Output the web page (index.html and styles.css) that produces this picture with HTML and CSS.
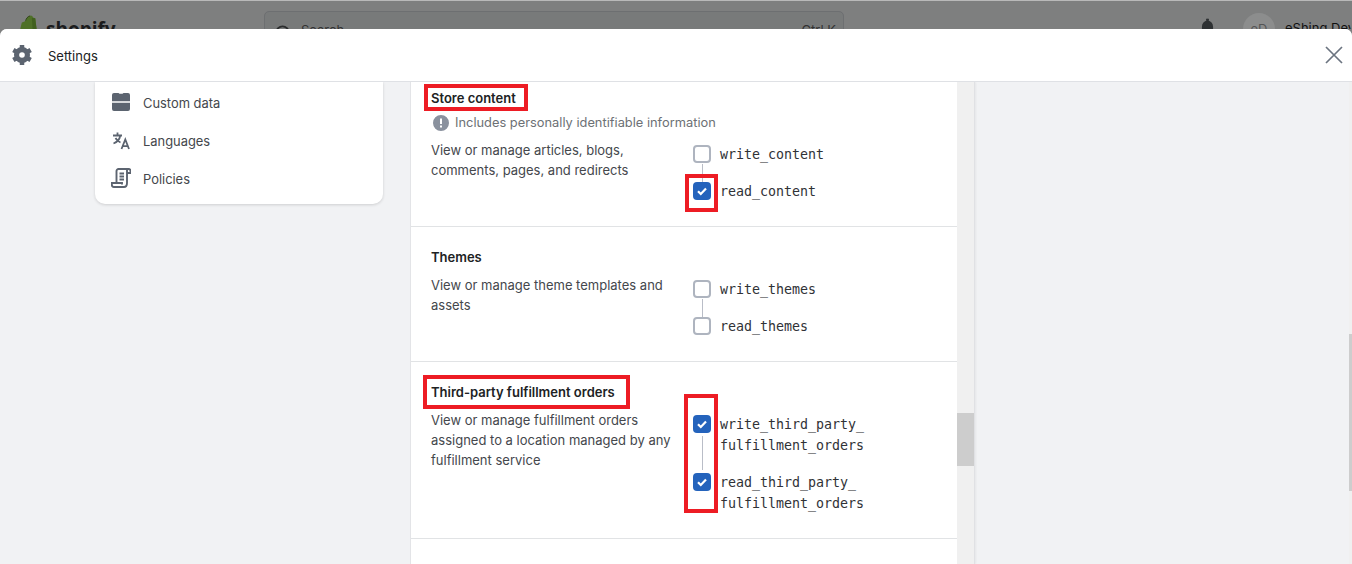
FILE: index.html
```html
<!DOCTYPE html>
<html lang="en">
<head>
<meta charset="utf-8">
<title>Settings</title>
<link rel="stylesheet" href="styles.css">
</head>
<body>
<div class="topbar">
  <div class="brand">
    <svg class="bag" viewBox="0 0 22 26"><path d="M1 23 4.500 8c2-1 3-1 4-2 1-3 3-5.500 5.500-5.500 1 0 2 1 2.200 2l2.300 1L21 23l-9 2.500z" fill="#4f7028"/><path d="M8.500 6c.5-2 2-4.500 4.500-5" fill="none" stroke="#2f4318" stroke-width="1"/><path d="M15 3l1.500 22 4.500-2-2.500-19.500z" fill="#41601f"/></svg>
    <span class="brand-name">shopify</span>
  </div>
  <div class="search">
    <svg class="search-icon" viewBox="0 0 20 20"><circle cx="9" cy="9" r="6.500" fill="none" stroke="#2b2d2e" stroke-width="2"/></svg>
    <span class="search-label">Search</span>
    <span class="search-key">Ctrl K</span>
  </div>
  <div class="account">
    <svg class="bell" viewBox="0 0 14 20"><path d="M7 0a1 1 0 0 1 1 2c3 1 5 3 5 7v7H1V9c0-4 2-6 5-7a1 1 0 0 1 1-2z" fill="#2e3133"/></svg>
    <span class="avatar">eD</span>
    <span class="account-name">eShing Dev</span>
  </div>
</div>

<div class="modal">
  <header class="modal-head">
    <svg class="gear" viewBox="0 0 20 20">
      <g class="gear-teeth"><path d="M10 0v20M1.340 5 18.660 15M18.660 5 1.340 15"/></g>
      <path fill-rule="evenodd" d="M10 2a8 8 0 1 1 0 16 8 8 0 0 1 0-16zM10 7.200a2.800 2.800 0 1 0 0 5.600 2.800 2.800 0 0 0 0-5.600z" fill="#5c6470"/>
      <circle cx="10" cy="10" r="2.800" fill="#fff"/>
    </svg>
    <span class="modal-title">Settings</span>
    <svg class="close" viewBox="0 0 18 18"><path d="M1 1l16 16M17 1 1 17" fill="none" stroke="#6b7480" stroke-width="1.700"/></svg>
  </header>
  <div class="modal-body">
    <nav class="side-card">
      <a class="side-item">
        <svg class="side-icon" viewBox="0 0 20 20"><path d="M3 1h4.500l1 .8h3l1-.8H17a2 2 0 0 1 2 2v6.300H1V3a2 2 0 0 1 2-2zM1 10.700h18V17a2 2 0 0 1-2 2H3a2 2 0 0 1-2-2z" fill="#5c6470"/></svg>
        <span>Custom data</span>
      </a>
      <a class="side-item">
        <svg class="side-icon" viewBox="0 0 20 20"><path d="M6.500 2.500v2.500M2 5.500h9M9.300 5.500C8.700 9 6.500 12 2.500 13.500M4.500 8c1 2 2.500 3.500 5 4.500M10.500 19l3.800-9.500L18 19M11.800 16.200h5" fill="none" stroke="#5c6470" stroke-width="1.800"/></svg>
        <span>Languages</span>
      </a>
      <a class="side-item">
        <svg class="side-icon" viewBox="0 0 20 20"><path d="M5.500 15V3a2 2 0 0 1 2-2h10a2 2 0 0 1 2 2v2H16M16 1.500V15c0 2.300-1 4-3 4H3c-1.500 0-2.200-1-2.200-2.500V15H11v1.500M8.500 5.500h4.500M8.500 8.500h4.500M8.500 11.500h4.500" fill="none" stroke="#5c6470" stroke-width="1.900"/></svg>
        <span>Policies</span>
      </a>
    </nav>

    <main class="scopes-panel">
      <section class="scope-section">
        <h3 class="scope-title">Store content</h3>
        <p class="pii">
          <svg class="pii-icon" viewBox="0 0 16 16"><path fill-rule="evenodd" d="M8 0a8 8 0 1 1 0 16A8 8 0 0 1 8 0zM7 3.500v5.500h2V3.500zM7 10.500v2h2v-2z" fill="#8a919e"/></svg>
          <span>Includes personally identifiable information</span>
        </p>
        <div class="scope-grid">
          <p class="scope-desc">View or manage articles, blogs, comments, pages, and redirects</p>
          <ul class="scope-list">
            <li class="scope-row"><span class="check"></span><code>write_content</code></li>
            <li class="scope-row"><span class="check on"><svg viewBox="0 0 18 18"><path d="M5 9.200l2.800 2.800L13 6.500"/></svg></span><code>read_content</code></li>
          </ul>
        </div>
        <i class="mark mark-title-store"></i>
        <i class="mark mark-check-store"></i>
      </section>

      <section class="scope-section">
        <h3 class="scope-title">Themes</h3>
        <div class="scope-grid">
          <p class="scope-desc">View or manage theme templates and assets</p>
          <ul class="scope-list">
            <li class="scope-row"><span class="check"></span><code>write_themes</code></li>
            <li class="scope-row"><span class="check"></span><code>read_themes</code></li>
          </ul>
        </div>
      </section>

      <section class="scope-section">
        <h3 class="scope-title">Third-party fulfillment orders</h3>
        <div class="scope-grid">
          <p class="scope-desc">View or manage fulfillment orders assigned to a location managed by any fulfillment service</p>
          <ul class="scope-list">
            <li class="scope-row"><span class="check on"><svg viewBox="0 0 18 18"><path d="M5 9.200l2.800 2.800L13 6.500"/></svg></span><code>write_third_party_<br>fulfillment_orders</code></li>
            <li class="scope-row"><span class="check on"><svg viewBox="0 0 18 18"><path d="M5 9.200l2.800 2.800L13 6.500"/></svg></span><code>read_third_party_<br>fulfillment_orders</code></li>
          </ul>
        </div>
        <i class="mark mark-title-third"></i>
        <i class="mark mark-check-third"></i>
      </section>
    </main>
    <div class="panel-scroll"><span class="panel-thumb"></span></div>
    <div class="modal-scroll"><span class="modal-thumb"></span></div>
  </div>
</div>
</body>
</html>
```
FILE: styles.css
```css
* { box-sizing: border-box; }
html, body { margin: 0; height: 100%; overflow: hidden; }
body {
  background: #7e7f7f;
  border-top: 1px solid #b9b9b9;
  font-family: Inter, "Noto Sans", sans-serif;
  font-size: 13px;
  line-height: 20px;
  color: #303236;
  position: relative;
}
.topbar {
  height: 28px;
  display: flex;
  align-items: flex-start;
  overflow: hidden;
}
.brand { flex: none; width: 264px; padding: 14px 0 0 17px; display: flex; gap: 7px; align-items: flex-start; }
.bag { width: 22px; height: 25px; }
.brand-name { font: 700 19px/28px "Open Sans", sans-serif; color: #1b1c1d; }
.search {
  flex: none;
  width: 580px;
  height: 40px;
  margin-top: 10px;
  border: 1px solid #6d6f71;
  border-radius: 5px;
  background: #787a7a;
  display: flex;
  align-items: flex-start;
  padding: 8px 7px 0 9px;
  gap: 8px;
  color: #333;
}
.search-icon { width: 19px; height: 19px; margin-top: 4px; }
.search-label { flex: 1; }
.account { flex: 1; min-width: 0; padding-left: 357px; display: flex; align-items: flex-start; }
.bell { flex: none; width: 13px; height: 20px; margin-top: 17px; }
.avatar { flex: none; width: 32px; height: 32px; border-radius: 50%; background: #8c8d8d; color: #555; margin: 12px 0 0 29px; text-align: center; line-height: 32px; }
.account-name { margin: 17px 0 0 10px; color: #111; white-space: nowrap; }

.modal {
  height: 535px;
  background: #f1f2f4;
  border-radius: 7px 7px 0 0;
  overflow: hidden;
}
.modal-head {
  height: 53px;
  background: #fff;
  border-bottom: 1px solid #dfe1e5;
  display: flex;
  align-items: center;
  padding: 0 9px 1px 12px;
}
.gear { width: 20px; height: 20px; }
.gear-teeth path { fill: none; stroke: #5c6470; stroke-width: 4.5; }
.modal-title { margin: 2px 0 0 16px; flex: 1; color: #202223; }
.close { width: 18px; height: 18px; }

.modal-body {
  height: 482px;
  display: flex;
  align-items: flex-start;
  padding-left: 95px;
  overflow: hidden;
}
.side-card {
  width: 288px;
  height: 122px;
  margin-right: 27px;
  padding: 3px 0 0 16px;
  background: #fff;
  border-radius: 0 0 10px 10px;
  box-shadow: 0 1px 3px rgba(23, 24, 24, .16);
  font-size: 12.9px;
}
.side-item { height: 38px; display: flex; align-items: center; gap: 12px; color: #44474c; }
.side-icon { width: 20px; height: 20px; flex: none; margin-top: -4px; }

.scopes-panel {
  width: 547px;
  height: 482px;
  background: #fff;
  border-left: 1px solid #e3e4e7;
  overflow: hidden;
  position: relative;
}
.scope-section {
  position: relative;
  border-bottom: 1px solid #e1e3e5;
  padding: 20px 20px 24px;
}
.scope-section:first-child { margin-top: -14px; }
.scope-title { margin: 0 0 8px; font-size: 13px; line-height: 20px; font-weight: 600; color: #202223; }
.pii { margin: -3px 0 7px; display: flex; align-items: center; gap: 6px; color: #6d7175; font-size: 12.85px; }
.pii-icon { width: 16px; height: 16px; margin-left: 2px; }
.scope-grid { display: grid; grid-template-columns: 262px 1fr; }
.scope-desc { margin: 0; width: 246px; color: #44474c; }
.scope-list { list-style: none; margin: 4px 0 0; padding: 0; display: flex; flex-direction: column; gap: 16px; }
.scope-row { display: flex; gap: 9px; align-items: flex-start; position: relative; }
.scope-row code { font: 13.3px/21px "DejaVu Sans Mono", monospace; color: #303236; }
.check {
  width: 18px;
  height: 18px;
  flex: none;
  margin-top: 1px;
  background: #fff;
  border: 2px solid #aeb4bf;
  border-radius: 4px;
  position: relative;
}
.check.on { background: #2463bc; border: 0; }
.check svg { display: block; width: 18px; height: 18px; }
.check path { fill: none; stroke: #fff; stroke-width: 2.2; }
.scope-row:first-child .check::after {
  content: "";
  position: absolute;
  left: 7px;
  top: 17px;
  width: 1px;
  height: 18px;
  background: #b9bdc7;
}
.scope-row:first-child .check.on::after { left: 9px; top: 21px; height: 34px; }

.mark { position: absolute; border: 4px solid #ed1c24; pointer-events: none; }
.mark-title-store { left: 13px; top: 16px; width: 104px; height: 27px; }
.mark-check-store { left: 274px; top: 106px; width: 33px; height: 38px; }
.mark-title-third { left: 12px; top: 13px; width: 207px; height: 34px; }
.mark-check-third { left: 273px; top: 32px; width: 34px; height: 119px; }

.panel-scroll { width: 18px; height: 482px; background: #f0f0f0; flex: none; border-right: 1px solid #e0e1e4; box-shadow: 1px 0 2px rgba(0,0,0,.05); }
.panel-thumb { display: block; height: 53px; margin-top: 331px; background: #cdcdcd; }
.modal-scroll { width: 3px; height: 482px; margin-left: auto; background: #f0f0f0; flex: none; }
.modal-thumb { display: block; height: 157px; margin-top: 252px; background: #cdcdcd; }
```
